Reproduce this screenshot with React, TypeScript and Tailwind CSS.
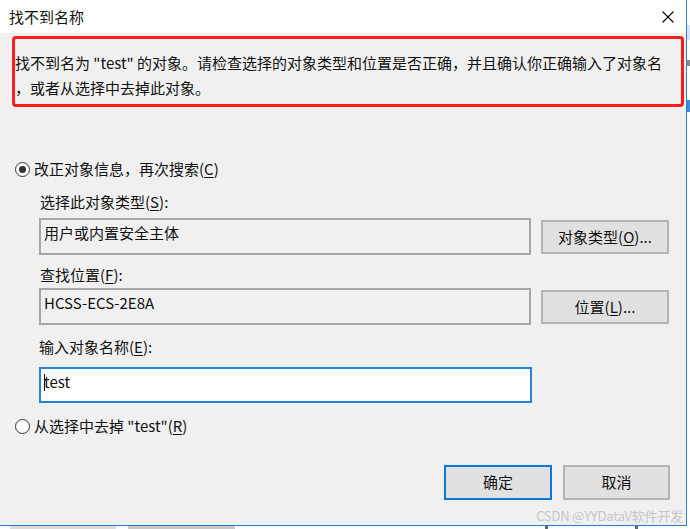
import React from "react";

const Key = ({ k }: { k: string }) => (
	<>
		(<span className="underline underline-offset-2">{k}</span>)
	</>
);

const Radio = ({ checked }: { checked?: boolean }) => (
	<span className="w-[15px] h-[15px] rounded-full border border-[#333333] bg-white flex items-center justify-center shrink-0">
		{checked && <span className="w-[7px] h-[7px] rounded-full bg-[#333333]" />}
	</span>
);

const ReadField = ({ text }: { text: string }) => (
	<div className="w-[492px] h-[37px] border-2 border-[#a6a6a6] bg-[#f0f0f0] pl-[3px] pt-[3px] leading-[20px]">
		{text}
	</div>
);

const SideButton = ({ children }: { children: React.ReactNode }) => (
	<button
		className="w-[128px] h-[34px] border-2 border-[#b4b4b4] bg-[#e1e1e1] flex items-center justify-center leading-[20px]"
		type="button"
	>
		{children}
	</button>
);

export default function App() {
	return (
		<div className="w-[690px] h-[529px] bg-white overflow-hidden flex flex-col font-['Noto_Sans_CJK_SC',sans-serif] text-[15px] text-[#111111]">
			<div className="flex h-[526px]">
				<div className="w-[687px] h-[526px] border-r border-b border-[#2b7bd1] bg-[#f0f0f0] flex flex-col relative">
					{/* Title bar */}
					<div className="h-[33px] bg-white flex items-center justify-between pl-[9px] pr-[12px] shrink-0">
						<span className="leading-[20px] pt-[1px]">找不到名称</span>
						<svg width="12" height="12" viewBox="0 0 12 12" className="mt-[1px]">
							<path d="M0.5 0.5 L11.5 11.5 M11.5 0.5 L0.5 11.5" stroke="#000" strokeWidth="1.1" />
						</svg>
					</div>

					{/* Error message */}
					<div className="mt-[3px] ml-[12px] w-[672px] h-[71px] border-[3px] border-[#fe1d1d] rounded-[4px] pt-[11px] leading-[25px] whitespace-nowrap">
						<div>找不到名为 "test" 的对象。请检查选择的对象类型和位置是否正确，并且确认你正确输入了对象名</div>
						<div>，或者从选择中去掉此对象。</div>
					</div>

					{/* Option 1 */}
					<div className="mt-[52px] ml-[15px] h-[20px] flex items-center gap-[4px] leading-[20px]">
						<Radio checked />
						<span>
							改正对象信息，再次搜索<Key k="C" />
						</span>
					</div>

					<div className="ml-[39px] flex flex-col">
						<div className="mt-[13px] h-[20px] leading-[20px] pl-[1px]">
							选择此对象类型<Key k="S" />:
						</div>
						<div className="mt-[6px] flex items-center gap-[10px]">
							<ReadField text="用户或内置安全主体" />
							<SideButton>
								对象类型<Key k="O" />...
							</SideButton>
						</div>

						<div className="mt-[10px] h-[20px] leading-[20px] pl-[1px]">
							查找位置<Key k="F" />:
						</div>
						<div className="mt-[3px] flex items-center gap-[10px]">
							<ReadField text="HCSS-ECS-2E8A" />
							<SideButton>
								位置<Key k="L" />...
							</SideButton>
						</div>

						<div className="mt-[12px] h-[20px] leading-[20px]">
							输入对象名称<Key k="E" />:
						</div>
						<div className="mt-[10px] w-[493px] h-[36px] border-2 border-[#2584dc] bg-white pl-[3px] pt-[3px] leading-[20px] flex items-start">
							<span className="w-px h-[17px] bg-black mt-[2px] -mr-px" />
							<span>test</span>
						</div>
					</div>

					{/* Option 2 */}
					<div className="mt-[13px] ml-[15px] h-[20px] flex items-center gap-[4px] leading-[20px]">
						<Radio />
						<span>
							从选择中去掉 "test"<Key k="R" />
						</span>
					</div>

					{/* Actions */}
					<div className="mt-[29px] flex justify-end gap-[11px] pr-[16px]">
						<button
							className="w-[108px] h-[35px] border-2 border-[#0a78d6] bg-[#e1e1e1] flex items-center justify-center"
							type="button"
						>
							确定
						</button>
						<button
							className="w-[107px] h-[35px] border-2 border-[#b4b4b4] bg-[#e1e1e1] flex items-center justify-center"
							type="button"
						>
							取消
						</button>
					</div>

					{/* Watermark */}
					<span className="absolute right-[3px] bottom-[1px] text-[13px] leading-[16px] tracking-[-0.2px] text-[#c6c6c6]">
						CSDN @YYDataV软件开发
					</span>
				</div>

				{/* Background window edge */}
				<div className="w-[3px] flex flex-col">
					<div className="h-[25px]" />
					<div className="h-[15px] bg-[#d6e6f5]" />
					<div className="h-[20px]" />
					<div className="h-[6px] bg-[#8a8a8a]" />
					<div className="h-[34px]" />
					<div className="h-[12px] bg-[#3b8de0]" />
				</div>
			</div>
			<div className="h-[3px] flex">
				<div className="ml-[10px] w-[106px] bg-[#dcdcdc]" />
				<div className="ml-[12px] w-[107px] bg-[#c8c8c8]" />
				<div className="ml-[310px] w-[3px] bg-[#666666]" />
				<div className="ml-[87px] w-[3px] bg-[#666666]" />
			</div>
		</div>
	);
}
